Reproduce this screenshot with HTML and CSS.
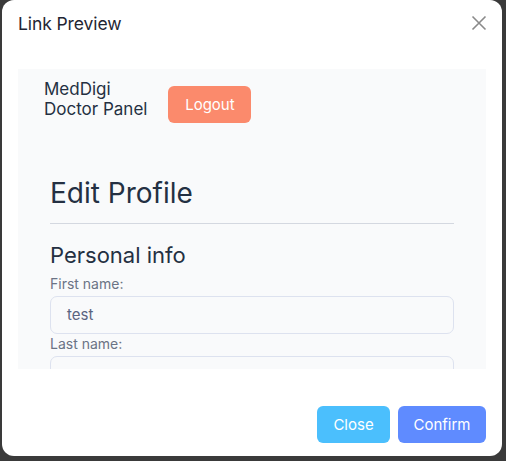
FILE: index.html
```html
<!DOCTYPE html>
<html>
<head>
<meta charset="utf-8">
<link rel="stylesheet" href="styles.css">
</head>
<body>
<div class="modal">
  <div class="modal-header">
    <h1 class="modal-title">Link Preview</h1>
    <button class="close-x" aria-label="Close">
      <svg width="16" height="16" viewBox="0 0 16 16"><path d="M1.5 1.5 L14.5 14.5 M14.5 1.5 L1.5 14.5" stroke="#8a8a8a" stroke-width="1.6" fill="none"/></svg>
    </button>
  </div>
  <div class="preview">
    <div class="nav">
      <div class="brand">MedDigi<br>Doctor Panel</div>
      <button class="btn btn-logout">Logout</button>
    </div>
    <div class="page">
      <h2 class="page-title">Edit Profile</h2>
      <hr class="divider">
      <h3 class="section-title">Personal info</h3>
      <label class="field-label">First name:</label>
      <div class="input">test</div>
      <label class="field-label">Last name:</label>
      <div class="input"></div>
    </div>
  </div>
  <div class="modal-footer">
    <button class="btn btn-close">Close</button>
    <button class="btn btn-confirm">Confirm</button>
  </div>
</div>
</body>
</html>
```

FILE: styles.css
```css
* { box-sizing: border-box; }
html, body { margin: 0; padding: 0; }
body {
  width: 506px;
  height: 461px;
  background: #3a3a3a;
  font-family: Inter, "Noto Sans", sans-serif;
  overflow: hidden;
}
.modal {
  margin-left: 2px;
  width: 500px;
  height: 456px;
  background: #ffffff;
  border-radius: 12px;
  display: flex;
  flex-direction: column;
  padding: 0 16px;
}
.modal-header {
  height: 69px;
  display: flex;
  align-items: flex-start;
  justify-content: space-between;
  padding-top: 12px;
}
.modal-title {
  margin: 0;
  font-size: 17.5px;
  font-weight: 400;
  color: #1f2633;
  line-height: 24px;
  letter-spacing: -0.1px;
}
.close-x {
  border: 0;
  background: none;
  padding: 0;
  margin-top: 3px;
  margin-right: -1px;
  width: 16px;
  height: 16px;
  display: flex;
}
.preview {
  height: 300px;
  background: #f9fafb;
  overflow: hidden;
}
.nav {
  display: flex;
  align-items: flex-start;
  padding: 10px 0 0 26px;
  gap: 21px;
}
.brand {
  font-size: 17px;
  line-height: 20px;
  color: #243042;
}
.btn {
  border: 0;
  color: #ffffff;
  font-family: Inter, "Noto Sans", sans-serif;
  font-size: 15px;
  border-radius: 6px;
  height: 37px;
  cursor: pointer;
}
.btn-logout {
  background: #fb8a6c;
  width: 83px;
  margin-top: 7px;
}
.page {
  padding: 0 32px;
  display: flex;
  flex-direction: column;
}
.page-title {
  margin: 53px 0 0;
  font-size: 28px;
  font-weight: 400;
  line-height: 34px;
  color: #243042;
}
.divider {
  margin: 13px 0 0;
  border: 0;
  border-top: 1px solid #d4d8e0;
}
.section-title {
  margin: 17px 0 5px;
  font-size: 22px;
  font-weight: 400;
  line-height: 28px;
  color: #243042;
}
.field-label {
  margin-top: 1px;
  font-size: 14px;
  line-height: 18px;
  color: #6b7385;
}
.input {
  margin-top: 3px;
  height: 38px;
  border: 1px solid #dde2ef;
  border-radius: 7px;
  background: #f9fafb;
  padding: 0 16px;
  font-size: 15px;
  line-height: 36px;
  color: #5a6480;
}
.modal-footer {
  display: flex;
  justify-content: flex-end;
  gap: 8px;
  margin-top: 37px;
}
.btn-close {
  background: #4bbffd;
  width: 73px;
}
.btn-confirm {
  background: #5f8bff;
  width: 88px;
}
```
